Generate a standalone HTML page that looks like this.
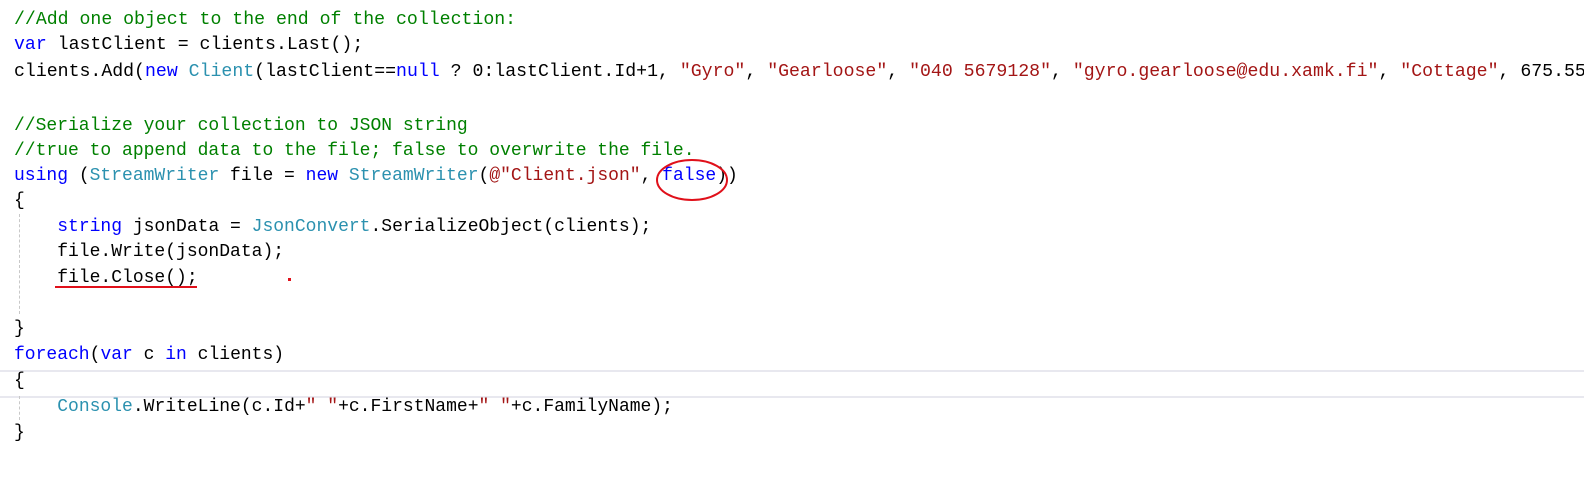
<!DOCTYPE html>
<html><head><meta charset="utf-8"><style>
html,body{margin:0;padding:0;background:#fff;width:1584px;height:490px;overflow:hidden;position:relative}
.l{position:absolute;left:14px;height:26px;line-height:26px;font-family:"Liberation Mono",monospace;font-size:18px;white-space:pre;color:#000}
.w{font-size:18.2px}
.c{color:#008000}.k{color:#0000ff}.t{color:#2b91af}.s{color:#a31515}
.hl{position:absolute;left:0;width:1584px;height:2px;background:#e8e8ef}
.g{position:absolute;left:19px;width:0;border-left:1px dashed #c8c8c8}
</style></head><body>
<div class="hl" style="top:370px"></div>
<div class="hl" style="top:396px"></div>
<div class="g" style="top:214px;height:100px"></div>
<div class="g" style="top:396px;height:24px"></div>
<div class="l w" style="top:7px"><span class="c">//Add one object to the end of the collection:</span></div>
<div class="l w" style="top:32px"><span class="k">var</span> lastClient = clients.Last();</div>
<div class="l w" style="top:59px">clients.Add(<span class="k">new</span> <span class="t">Client</span>(lastClient==<span class="k">null</span> ? 0:lastClient.Id+1, <span class="s">"Gyro"</span>, <span class="s">"Gearloose"</span>, <span class="s">"040 5679128"</span>, <span class="s">"gyro.gearloose@edu.xamk.fi"</span>, <span class="s">"Cottage"</span>, 675.55</div>
<div class="l" style="top:113px"><span class="c">//Serialize your collection to JSON string</span></div>
<div class="l" style="top:138px"><span class="c">//true to append data to the file; false to overwrite the file.</span></div>
<div class="l" style="top:163px"><span class="k">using</span> (<span class="t">StreamWriter</span> file = <span class="k">new</span> <span class="t">StreamWriter</span>(<span class="s">@"Client.json"</span>, <span class="k">false</span>))</div>
<div class="l" style="top:188px">{</div>
<div class="l" style="top:214px">    <span class="k">string</span> jsonData = <span class="t">JsonConvert</span>.SerializeObject(clients);</div>
<div class="l" style="top:239px">    file.Write(jsonData);</div>
<div class="l" style="top:265px">    file.Close();</div>
<div class="l" style="top:316px">}</div>
<div class="l" style="top:342px"><span class="k">foreach</span>(<span class="k">var</span> c <span class="k">in</span> clients)</div>
<div class="l" style="top:368px">{</div>
<div class="l" style="top:394px">    <span class="t">Console</span>.WriteLine(c.Id+<span class="s">" "</span>+c.FirstName+<span class="s">" "</span>+c.FamilyName);</div>
<div class="l" style="top:420px">}</div>
<div style="position:absolute;left:55px;top:286px;width:142px;height:2px;background:#e0101a"></div>
<div style="position:absolute;left:288px;top:278px;width:3px;height:3px;background:#e0101a"></div>
<svg style="position:absolute;left:0;top:0" width="1584" height="490"><ellipse cx="692" cy="180" rx="35" ry="20" fill="none" stroke="#e0101a" stroke-width="2"/></svg>
</body></html>
